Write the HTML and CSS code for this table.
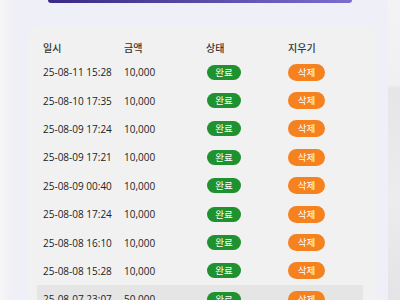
FILE: index.html
```html
<!DOCTYPE html>
<html lang="ko">
<head>
<meta charset="utf-8">
<link rel="stylesheet" href="styles.css">
</head>
<body>
<div class="page">
  <div class="strip-left"></div>
  <main class="main">
    <div class="topbtn"></div>
    <section class="card">
      <table class="list">
        <thead>
          <tr><th class="c1">일시</th><th class="c2">금액</th><th class="c3">상태</th><th class="c4">지우기</th></tr>
        </thead>
        <tbody>
          <tr><td>25-08-11 15:28</td><td>10,000</td><td><span class="ok">완료</span></td><td><span class="del">삭제</span></td></tr>
          <tr><td>25-08-10 17:35</td><td>10,000</td><td><span class="ok">완료</span></td><td><span class="del">삭제</span></td></tr>
          <tr><td>25-08-09 17:24</td><td>10,000</td><td><span class="ok">완료</span></td><td><span class="del">삭제</span></td></tr>
          <tr><td>25-08-09 17:21</td><td>10,000</td><td><span class="ok">완료</span></td><td><span class="del">삭제</span></td></tr>
          <tr><td>25-08-09 00:40</td><td>10,000</td><td><span class="ok">완료</span></td><td><span class="del">삭제</span></td></tr>
          <tr><td>25-08-08 17:24</td><td>10,000</td><td><span class="ok">완료</span></td><td><span class="del">삭제</span></td></tr>
          <tr><td>25-08-08 16:10</td><td>10,000</td><td><span class="ok">완료</span></td><td><span class="del">삭제</span></td></tr>
          <tr><td>25-08-08 15:28</td><td>10,000</td><td><span class="ok">완료</span></td><td><span class="del">삭제</span></td></tr>
          <tr class="hl"><td>25-08-07 23:07</td><td>50,000</td><td><span class="ok">완료</span></td><td><span class="del">삭제</span></td></tr>
        </tbody>
      </table>
    </section>
  </main>
  <div class="strip-right"></div>
</div>
</body>
</html>
```

FILE: styles.css
```css
html, body {
  margin: 0;
  padding: 0;
  height: 100%;
  overflow: hidden;
}
body {
  font-family: "Open Sans", "Noto Sans CJK KR", sans-serif;
  color: #222;
  background: #f3f3f5;
}
.page {
  display: flex;
  width: 400px;
  height: 300px;
}
.strip-left {
  width: 12px;
  flex-shrink: 0;
  background: linear-gradient(90deg, #f6f6f7, #f0f0f4);
}
.strip-right {
  flex: 1;
  background: linear-gradient(180deg, #f3f3f6 0, #f0f0f3 85px, #e6e6e8 88px, #ececee 200px, #e4e4e6 300px);
}
.main {
  width: 376px;
  flex-shrink: 0;
  background: #efeff8;
  display: flex;
  flex-direction: column;
  align-items: flex-start;
}
.topbtn {
  flex-shrink: 0;
  width: 304px;
  height: 3px;
  margin-left: 36px;
  border-radius: 0 0 6px 6px;
  background: linear-gradient(90deg, #3a2a86, #5a4aa8 50%, #7c6ccf);
}
.card {
  flex-shrink: 0;
  margin: 22px 0 0 16px;
  width: 348px;
  height: 320px;
  background: #f1f1f1;
  border-radius: 12px;
  padding: 11px 0 0 9px;
  box-sizing: border-box;
}
.list {
  border-collapse: collapse;
  width: 326px;
  font-size: 10px;
}
.list th {
  height: 22px;
  text-align: left;
  font-weight: 500;
  padding: 0 0 0 6px;
  color: #333;
  font-size: 10px;
}
.c1 { width: 75px; }
.c2 { width: 76px; }
.c3 { width: 76px; }
.list td {
  height: 28.4px;
  padding: 0 0 0 6px;
  white-space: nowrap;
  vertical-align: middle;
}
.list tr.hl td {
  background: #e5e5e5;
}
.ok, .del {
  display: inline-block;
  color: #fff;
  font-size: 9.5px;
  font-weight: 400;
  text-align: center;
  border-radius: 8px;
  line-height: 15px;
}
.ok {
  background: #1f912f;
  width: 34px;
  margin-left: 1px;
}
.del {
  background: #f6811f;
  width: 37px;
  line-height: 17px;
  border-radius: 9px;
}
```
